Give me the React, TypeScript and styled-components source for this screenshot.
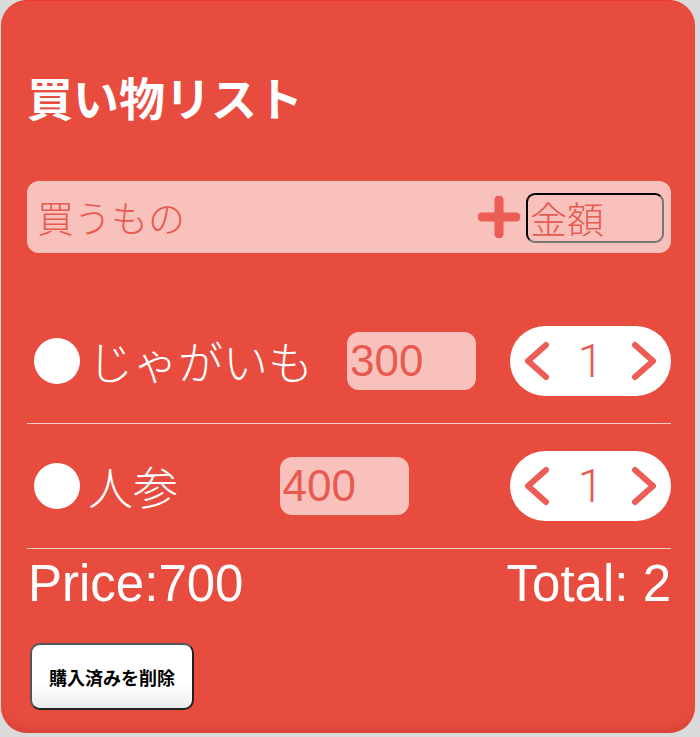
import React from "react";
import styled, { createGlobalStyle } from "styled-components";

const GlobalStyle = createGlobalStyle`
  html, body {
    margin: 0;
    padding: 0;
    background: #dadada;
  }
  body {
    font-family: "Liberation Sans", "Noto Sans CJK JP", sans-serif;
  }
`;

const jp = `"Noto Sans CJK JP", "Liberation Sans", sans-serif`;
const latin = `"Liberation Sans", "Noto Sans CJK JP", sans-serif`;

const Card = styled.div`
  width: 694px;
  margin-left: 1px;
  box-sizing: border-box;
  padding: 72px 24px 23px 26px;
  background: #e74c3f;
  border-top: 1px solid #ea3a2e;
  border-radius: 26px;
  box-shadow: inset 0 -10px 12px -8px rgba(150, 30, 20, 0.25);
`;

const Title = styled.h1`
  margin: 0 0 62px;
  font-family: ${jp};
  font-size: 46px;
  line-height: 46px;
  font-weight: 700;
  color: #fff;
`;

const AddBar = styled.div`
  display: flex;
  align-items: center;
  height: 72px;
  padding: 0 7px 0 10px;
  box-sizing: border-box;
  background: #f9c1bb;
  border-radius: 12px;
`;

const NameInput = styled.input`
  flex: 1;
  min-width: 0;
  border: none;
  outline: none;
  background: transparent;
  font-family: ${jp};
  font-size: 37px;
  font-weight: 300;
  color: #e85a50;
  padding: 0;
  &::placeholder {
    color: #e85a50;
  }
`;

const PlusButton = styled.button`
  display: flex;
  align-items: center;
  justify-content: center;
  width: 44px;
  height: 44px;
  padding: 0;
  margin-right: 5px;
  border: none;
  background: transparent;
`;

const AmountInput = styled.input`
  width: 138px;
  height: 50px;
  box-sizing: border-box;
  margin-top: 2px;
  padding: 0 2px;
  border: 2px inset #555;
  border-color: #111 #777 #777 #111;
  border-radius: 9px;
  outline: none;
  background: transparent;
  font-family: ${jp};
  font-size: 37px;
  font-weight: 300;
  color: #e85a50;
  &::placeholder {
    color: #e85a50;
  }
`;

const List = styled.ul`
  list-style: none;
  margin: 46px 0 0;
  padding: 0;
`;

const Row = styled.li`
  display: flex;
  align-items: center;
  justify-content: space-between;
  padding: 27px 0;
  border-bottom: 1px solid #f6cbc6;
`;

const Label = styled.div`
  display: flex;
  align-items: center;
  gap: 8px;
  margin-left: 7px;
`;

const Dot = styled.span<{ $done: boolean }>`
  width: 46px;
  height: 46px;
  border-radius: 50%;
  background: ${(p) => (p.$done ? "transparent" : "#fff")};
  border: ${(p) => (p.$done ? "3px solid #fff" : "none")};
  box-sizing: border-box;
`;

const ItemName = styled.span`
  font-family: ${jp};
  font-size: 45px;
  font-weight: 300;
  line-height: 50px;
  color: #fff;
`;

const PriceInput = styled.input`
  width: 129px;
  height: 58px;
  box-sizing: border-box;
  padding: 0 3px;
  border: none;
  outline: none;
  border-radius: 12px;
  background: #f9c1bb;
  font-family: ${latin};
  font-size: 44px;
  color: #e85a50;
`;

const Stepper = styled.div`
  display: flex;
  align-items: center;
  justify-content: space-between;
  width: 161px;
  height: 70px;
  box-sizing: border-box;
  padding: 0 14px;
  background: #fff;
  border-radius: 35px;
`;

const StepButton = styled.button`
  display: flex;
  padding: 0;
  border: none;
  background: transparent;
`;

const Count = styled.span`
  font-family: "Roboto", ${latin};
  font-weight: 300;
  font-size: 46px;
  line-height: 50px;
  color: #e85a50;
`;

const Footer = styled.div`
  display: flex;
  justify-content: space-between;
  margin-top: 10px;
  padding: 0 0 0 1px;
  font-family: ${latin};
  font-size: 51px;
  line-height: 50px;
  color: #fff;
`;

const ClearButton = styled.button`
  display: block;
  width: 164px;
  height: 67px;
  margin: 34px 0 0 3px;
  border: 2px solid #333;
  border-color: #555 #222 #222 #555;
  border-radius: 10px;
  background: linear-gradient(#ffffff 60%, #ededed);
  font-family: ${jp};
  font-weight: 700;
  font-size: 18px;
  color: #000;
`;

const Chevron = ({ dir }: { dir: "left" | "right" }) => (
  <svg width="26" height="40" viewBox="0 0 26 40">
    <path
      d={dir === "left" ? "M22 4 L4 20 L22 36" : "M4 4 L22 20 L4 36"}
      fill="none"
      stroke="#ec5d55"
      strokeWidth="6"
      strokeLinecap="round"
      strokeLinejoin="round"
    />
  </svg>
);

const PlusIcon = () => (
  <svg width="42" height="42" viewBox="0 0 42 42">
    <path d="M21 4 V38 M4 21 H38" stroke="#ec5d55" strokeWidth="9" strokeLinecap="round" />
  </svg>
);

interface Item {
  name: string;
  price: number;
  count: number;
  done: boolean;
}

const items: Item[] = [
  { name: "じゃがいも", price: 300, count: 1, done: false },
  { name: "人参", price: 400, count: 1, done: false },
];

export default function App() {
  const total = items.reduce((s, i) => s + i.count, 0);
  const price = items.reduce((s, i) => s + i.price * i.count, 0);
  return (
    <>
      <GlobalStyle />
      <Card>
        <Title>買い物リスト</Title>
        <AddBar>
          <NameInput placeholder="買うもの" />
          <PlusButton aria-label="追加">
            <PlusIcon />
          </PlusButton>
          <AmountInput placeholder="金額" />
        </AddBar>
        <List>
          {items.map((item) => (
            <Row key={item.name}>
              <Label>
                <Dot $done={item.done} />
                <ItemName>{item.name}</ItemName>
              </Label>
              <PriceInput defaultValue={item.price} />
              <Stepper>
                <StepButton aria-label="減らす">
                  <Chevron dir="left" />
                </StepButton>
                <Count>{item.count}</Count>
                <StepButton aria-label="増やす">
                  <Chevron dir="right" />
                </StepButton>
              </Stepper>
            </Row>
          ))}
        </List>
        <Footer>
          <span>Price:{price}</span>
          <span>Total: {total}</span>
        </Footer>
        <ClearButton>購入済みを削除</ClearButton>
      </Card>
    </>
  );
}
